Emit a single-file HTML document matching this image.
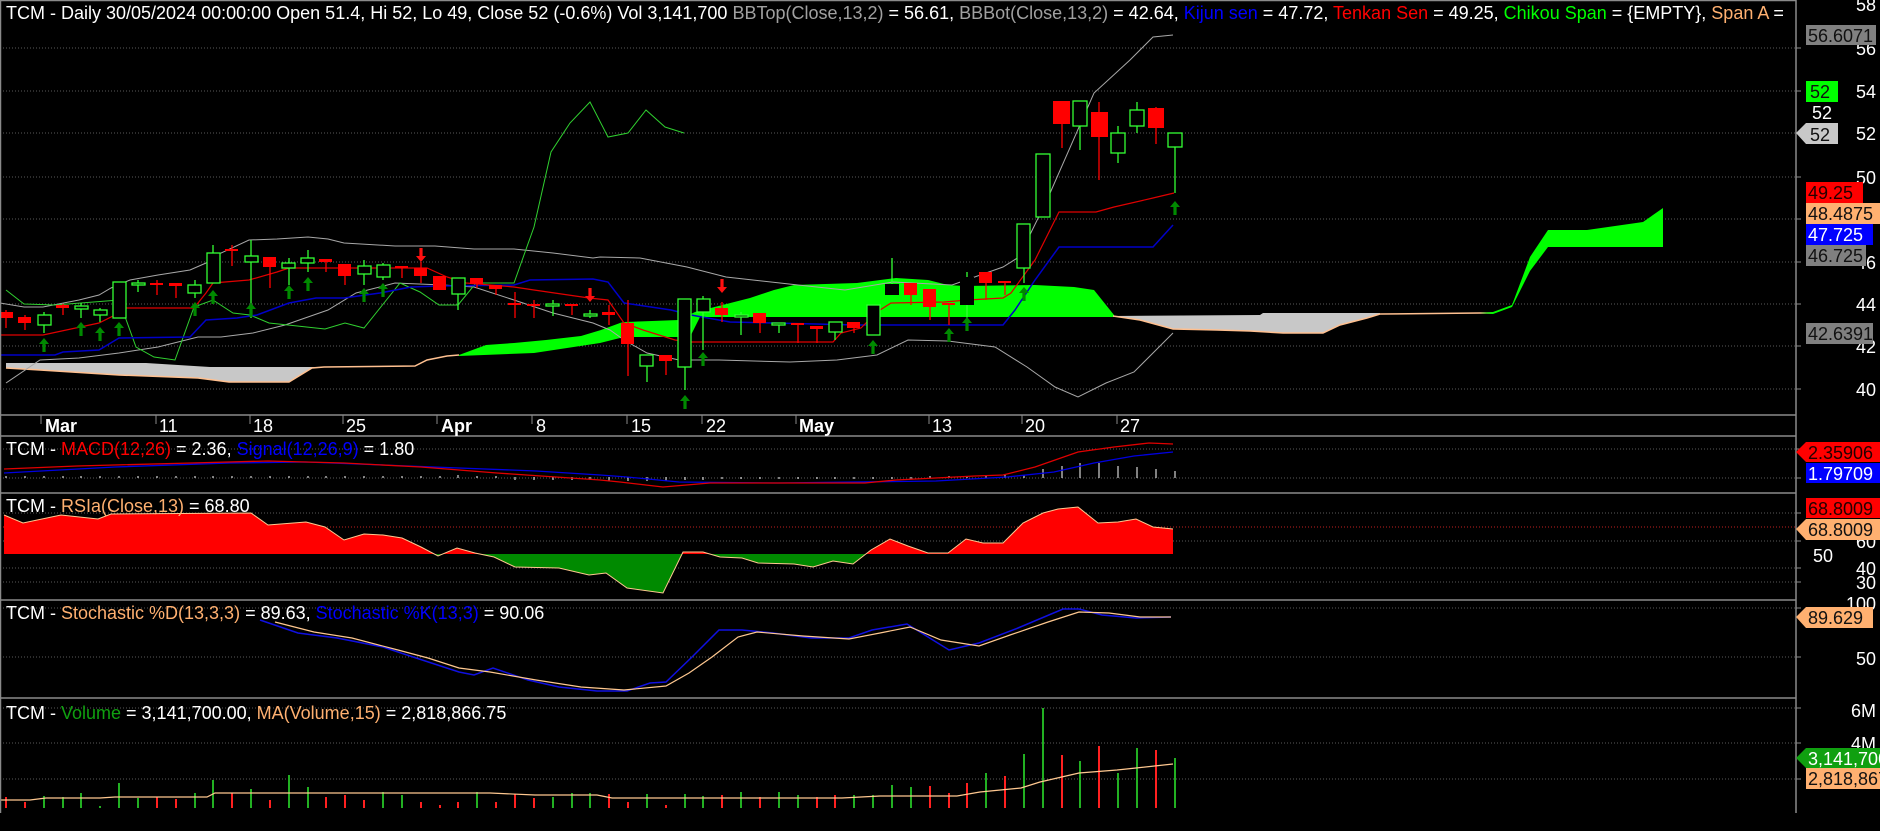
<!DOCTYPE html>
<html><head><meta charset="utf-8"><style>
html,body{margin:0;padding:0;background:#000;width:1880px;height:831px;overflow:hidden}
svg{display:block}
text{font-family:"Liberation Sans",Arial,sans-serif;font-size:18px}
</style></head><body>
<svg width="1880" height="831" viewBox="0 0 1880 831" xmlns="http://www.w3.org/2000/svg">
<defs>
<clipPath id="cp"><rect x="0" y="0" width="1795" height="831"/></clipPath>
<clipPath id="above"><rect x="0" y="490" width="1795" height="64"/></clipPath>
<clipPath id="below"><rect x="0" y="554" width="1795" height="46"/></clipPath>
<path id="ua" d="M0,0 L5,6 L1.6,6 L1.6,14 L-1.6,14 L-1.6,6 L-5,6Z" fill="#008a00"/>
<path id="da" d="M0,14 L5,8 L1.6,8 L1.6,0 L-1.6,0 L-1.6,8 L-5,8Z" fill="#ff1010"/>
</defs>
<rect width="1880" height="831" fill="#000"/>

<g stroke="#5a5a5a" stroke-width="1" stroke-dasharray="1,2">
<line x1="0" y1="48" x2="1795" y2="48"/><line x1="0" y1="91" x2="1795" y2="91"/><line x1="0" y1="133" x2="1795" y2="133"/><line x1="0" y1="177" x2="1795" y2="177"/><line x1="0" y1="219" x2="1795" y2="219"/><line x1="0" y1="262" x2="1795" y2="262"/><line x1="0" y1="304" x2="1795" y2="304"/><line x1="0" y1="346" x2="1795" y2="346"/><line x1="0" y1="389" x2="1795" y2="389"/>
<line x1="0" y1="449" x2="1795" y2="449"/><line x1="0" y1="478" x2="1795" y2="478"/>
<line x1="0" y1="513" x2="1795" y2="513"/><line x1="0" y1="541" x2="1795" y2="541"/><line x1="0" y1="568" x2="1795" y2="568"/><line x1="0" y1="582" x2="1795" y2="582"/>
<line x1="0" y1="608" x2="1795" y2="608"/><line x1="0" y1="657" x2="1795" y2="657"/>
<line x1="0" y1="708" x2="1795" y2="708"/><line x1="0" y1="743" x2="1795" y2="743"/><line x1="0" y1="779" x2="1795" y2="779"/>
</g>
<line x1="0" y1="527" x2="1795" y2="527" stroke="#c02020" stroke-dasharray="1,2"/>

<polygon fill="#c8c8c8" points="6,363 146,363 210,367 324,367 312,368 289,382 229,382 198,378 119,375 40,370 6,368"/>
<polyline fill="none" stroke="#ffc090" stroke-width="1.5" points="6,368 40,370 119,375 198,378 229,382 289,382 312,368 324,367 415,366 427,360 447,356 459,355"/>
<polygon fill="#00ff00" points="459,355 486,345 514,343 546,340 581,336 601,330 620,323 624,322 679,320 695,312 750,298 774,290 794,285 857,283 896,278 928,280 948,285 964,286 1035,285 1074,287 1094,290 1114,315 1114,317 700,317 690,337 624,337 600,343 534,353 459,356"/>
<polygon fill="#c8c8c8" points="1113,316 1260,315 1263,313 1380,313 1380,314 1367,318 1340,325 1323,333 1283,333 1250,331 1217,330 1173,329 1140,320 1113,316"/>
<polyline fill="none" stroke="#ffc090" stroke-width="1.5" points="1113,316 1140,320 1173,329 1217,330 1250,331 1283,333 1323,333 1340,325 1367,318 1380,314 1480,313 1493,313"/>
<polygon fill="#00ff00" points="1480,313 1493,312 1512,305 1530,257 1548,230 1587,230 1643,222 1663,208 1663,247 1548,247 1530,271 1512,307 1493,314"/>

<g fill="none" stroke="#a8a8a8" stroke-width="1">
<polyline points="0,303 24,307 43,307 79,300 99,295 111,288 130,280 158,275 190,270 206,263 221,253 249,240 277,239 308,237 328,239 344,243 395,246 435,246 474,249 514,249 553,253 593,258 600,257 640,258 687,267 726,277 798,285 845,290 893,282 952,285 1003,267 1019,257 1047,200 1094,93 1130,60 1153,37 1173,35"/>
<polyline points="6,383 40,360 79,358 119,353 158,347 198,337 221,337 253,333 285,325 328,310 356,293 395,283 443,285 474,287 514,300 553,313 593,323 610,330 624,340 647,353 679,360 719,360 790,362 837,360 877,355 908,340 948,341 995,347 1027,367 1055,387 1078,397 1106,383 1134,372 1153,353 1173,333"/>
</g>
<polyline fill="none" stroke="#30d030" stroke-width="1" points="6,290 24,304 55,305 119,300 136,347 154,357 175,360 194,307 213,300 233,313 250,315 269,323 288,325 325,329 345,323 364,328 400,283 420,292 439,305 458,305 476,283 514,283 534,227 551,152 570,123 590,102 608,137 628,133 646,110 665,127 684,133"/>
<polyline fill="none" stroke="#0000c8" stroke-width="1.5" points="0,355 55,355 63,352 99,350 119,338 190,337 206,320 237,318 257,315 289,303 316,298 344,298 380,293 411,287 439,286 514,285 530,280 593,279 608,282 624,303 671,310 691,315 730,322 857,325 1003,325 1015,310 1035,280 1059,247 1153,247 1173,225"/>
<polyline fill="none" stroke="#e00000" stroke-width="1.2" points="0,335 43,335 99,323 119,313 126,308 194,308 206,293 213,283 249,280 277,272 289,268 427,268 447,277 466,283 514,287 534,290 589,298 608,300 624,323 643,330 675,340 691,342 833,342 841,333 861,328 877,312 891,303 944,302 968,300 1003,298 1011,293 1035,260 1059,212 1096,212 1114,207 1153,198 1174,193"/>

<g stroke-width="1.3">
<g stroke="#ff0000" fill="#ff0000">
<line x1="6" y1="310" x2="6" y2="328"/><rect x="0" y="312" width="13" height="6" stroke="none"/>
<line x1="25" y1="315" x2="25" y2="330"/><rect x="18" y="317" width="13" height="6" stroke="none"/>
<line x1="63" y1="304" x2="63" y2="315"/><rect x="56" y="305" width="13" height="3" stroke="none"/>
<line x1="157" y1="280" x2="157" y2="295"/><rect x="150" y="283" width="13" height="2" stroke="none"/>
<line x1="176" y1="283" x2="176" y2="298"/><rect x="169" y="283" width="13" height="3" stroke="none"/>
<line x1="232" y1="245" x2="232" y2="266"/><rect x="225" y="249" width="13" height="2" stroke="none"/>
<line x1="270" y1="257" x2="270" y2="288"/><rect x="263" y="257" width="13" height="10" stroke="none"/>
<line x1="326" y1="259" x2="326" y2="272"/><rect x="319" y="259" width="13" height="3" stroke="none"/>
<line x1="345" y1="264" x2="345" y2="285"/><rect x="338" y="264" width="13" height="12" stroke="none"/>
<line x1="402" y1="266" x2="402" y2="278"/><rect x="395" y="266" width="13" height="2" stroke="none"/>
<line x1="421" y1="262" x2="421" y2="283"/><rect x="414" y="268" width="13" height="8" stroke="none"/>
<line x1="440" y1="276" x2="440" y2="290"/><rect x="433" y="276" width="13" height="14" stroke="none"/>
<line x1="477" y1="278" x2="477" y2="288"/><rect x="470" y="278" width="13" height="6" stroke="none"/>
<line x1="496" y1="285" x2="496" y2="295"/><rect x="489" y="285" width="13" height="4" stroke="none"/>
<line x1="515" y1="292" x2="515" y2="318"/><rect x="508" y="303" width="13" height="2" stroke="none"/>
<line x1="534" y1="300" x2="534" y2="318"/><rect x="527" y="304" width="13" height="2" stroke="none"/>
<line x1="572" y1="304" x2="572" y2="315"/><rect x="565" y="304" width="13" height="2" stroke="none"/>
<line x1="609" y1="305" x2="609" y2="325"/><rect x="602" y="312" width="13" height="3" stroke="none"/>
<line x1="628" y1="300" x2="628" y2="376"/><rect x="621" y="323" width="13" height="21" stroke="none"/>
<line x1="666" y1="355" x2="666" y2="375"/><rect x="659" y="355" width="13" height="6" stroke="none"/>
<line x1="722" y1="302" x2="722" y2="322"/><rect x="715" y="308" width="13" height="7" stroke="none"/>
<line x1="760" y1="313" x2="760" y2="333"/><rect x="753" y="313" width="13" height="10" stroke="none"/>
<line x1="798" y1="323" x2="798" y2="343"/><rect x="791" y="323" width="13" height="2" stroke="none"/>
<line x1="817" y1="326" x2="817" y2="343"/><rect x="810" y="326" width="13" height="3" stroke="none"/>
<line x1="854" y1="322" x2="854" y2="333"/><rect x="847" y="322" width="13" height="6" stroke="none"/>
<line x1="911" y1="283" x2="911" y2="305"/><rect x="904" y="283" width="13" height="12" stroke="none"/>
<line x1="930" y1="289" x2="930" y2="320"/><rect x="923" y="289" width="13" height="18" stroke="none"/>
<line x1="949" y1="303" x2="949" y2="325"/><rect x="942" y="303" width="13" height="2" stroke="none"/>
<line x1="986" y1="272" x2="986" y2="300"/><rect x="979" y="272" width="13" height="11" stroke="none"/>
<line x1="1005" y1="281" x2="1005" y2="295"/><rect x="998" y="281" width="13" height="2" stroke="none"/>
<line x1="1062" y1="101" x2="1062" y2="148"/><rect x="1053" y="101" width="17" height="23" stroke="none"/>
<line x1="1099" y1="102" x2="1099" y2="180"/><rect x="1091" y="112" width="17" height="25" stroke="none"/>
<line x1="1156" y1="107" x2="1156" y2="144"/><rect x="1148" y="108" width="16" height="20" stroke="none"/>
</g>
<g stroke="#33ff33" fill="#000">
<line x1="44" y1="312" x2="44" y2="333"/><rect x="38" y="315" width="13" height="10"/>
<line x1="81" y1="303" x2="81" y2="318"/><rect x="75" y="306" width="13" height="3"/>
<line x1="100" y1="308" x2="100" y2="322"/><rect x="94" y="310" width="13" height="5"/>
<rect x="113" y="282" width="13" height="36"/>
<line x1="138" y1="280" x2="138" y2="292"/><rect x="132" y="283" width="13" height="2"/>
<line x1="195" y1="280" x2="195" y2="298"/><rect x="188" y="285" width="13" height="8"/>
<line x1="213" y1="245" x2="213" y2="283"/><rect x="207" y="253" width="13" height="30"/>
<line x1="251" y1="240" x2="251" y2="318"/><rect x="245" y="256" width="13" height="6"/>
<line x1="289" y1="258" x2="289" y2="285"/><rect x="282" y="263" width="13" height="5"/>
<line x1="308" y1="250" x2="308" y2="272"/><rect x="301" y="258" width="13" height="5"/>
<line x1="364" y1="260" x2="364" y2="285"/><rect x="358" y="266" width="13" height="8"/>
<line x1="383" y1="263" x2="383" y2="280"/><rect x="377" y="265" width="13" height="12"/>
<line x1="458" y1="278" x2="458" y2="310"/><rect x="452" y="278" width="13" height="16"/>
<line x1="553" y1="300" x2="553" y2="316"/><rect x="546" y="304" width="13" height="2"/>
<line x1="590" y1="310" x2="590" y2="318"/><rect x="584" y="314" width="13" height="2"/>
<line x1="647" y1="355" x2="647" y2="382"/><rect x="640" y="355" width="13" height="11"/>
<line x1="685" y1="299" x2="685" y2="390"/><rect x="678" y="299" width="13" height="68"/>
<line x1="703" y1="296" x2="703" y2="350"/><rect x="697" y="299" width="13" height="13"/>
<line x1="741" y1="312" x2="741" y2="335"/><rect x="735" y="315" width="13" height="2"/>
<line x1="779" y1="323" x2="779" y2="333"/><rect x="772" y="323" width="13" height="2"/>
<line x1="835" y1="322" x2="835" y2="340"/><rect x="829" y="322" width="13" height="10"/>
<rect x="867" y="305" width="13" height="30"/>
<line x1="892" y1="258" x2="892" y2="284"/>
<line x1="967" y1="272" x2="967" y2="320"/>
<line x1="1024" y1="224" x2="1024" y2="283"/><rect x="1017" y="224" width="13" height="44"/>
<rect x="1036" y="154" width="14" height="63"/>
<line x1="1080" y1="101" x2="1080" y2="150"/><rect x="1073" y="101" width="14" height="25"/>
<line x1="1118" y1="126" x2="1118" y2="163"/><rect x="1111" y="133" width="14" height="20"/>
<line x1="1137" y1="102" x2="1137" y2="133"/><rect x="1130" y="110" width="14" height="16"/>
<line x1="1175" y1="147" x2="1175" y2="193"/><rect x="1168" y="133" width="14" height="14"/>
</g>
<rect x="885" y="284" width="14" height="11" fill="#000"/>
<rect x="960" y="277" width="14" height="28" fill="#000"/>
</g>

<use href="#ua" x="44" y="338"/><use href="#ua" x="81" y="322"/><use href="#ua" x="100" y="327"/><use href="#ua" x="119" y="322"/>
<use href="#ua" x="195" y="302"/><use href="#ua" x="213" y="290"/><use href="#ua" x="251" y="303"/><use href="#ua" x="289" y="285"/>
<use href="#ua" x="308" y="277"/><use href="#ua" x="364" y="288"/><use href="#ua" x="383" y="283"/>
<use href="#ua" x="685" y="395"/><use href="#ua" x="703" y="352"/><use href="#ua" x="873" y="340"/><use href="#ua" x="949" y="328"/>
<use href="#ua" x="967" y="317"/><use href="#ua" x="1024" y="287"/><use href="#ua" x="1175" y="201"/>
<use href="#da" x="421" y="248"/><use href="#da" x="590" y="288"/><use href="#da" x="722" y="279"/>

<g stroke="#fff" stroke-width="1">
<path d="M6,476V478M25,476V478M44,476V478M63,476V478M81,476V478M100,476V478M119,476V478M138,476V478M157,476V478M176,476V478M195,476V478M213,476V478M232,476V478M251,476V478M270,476V478M289,476V478M308,476V478M326,476V478M345,476V478M364,476V478M383,476V478M402,476V478M421,476V478M440,476V478M458,475V478M477,476V478M496,476V478M515,477V480M534,477V480M553,477V480M572,477V480M590,477V480M609,477V481M628,477V481M647,477V481M666,477V481M685,477V480M703,477V480M722,477V479M741,477V479M760,477V479M779,477V479M798,477V479M817,477V479M835,477V479M854,477V479M873,477V479M892,477V479M911,477V479M930,476V478M949,476V478M967,476V478M986,475V478M1005,474V478M1024,475V478M1043,469V478M1062,466V478M1080,463V478M1099,463V478M1118,466V478M1137,467V478M1156,469V478M1175,471V478"/>
</g>
<polyline fill="none" stroke="#0000e0" stroke-width="1.3" points="4,473 115,467 230,463 306,462 383,465 459,468 536,471 600,475 627,477 679,482 778,483 936,481 1007,477 1054,472 1094,463 1134,456 1173,452"/>
<polyline fill="none" stroke="#e00000" stroke-width="1.3" points="4,469 77,466 191,463 268,461 344,463 421,467 497,473 600,480 620,482 663,487 710,483 865,483 896,480 975,476 1003,475 1035,467 1078,452 1114,447 1149,443 1173,444"/>

<g>
<polygon clip-path="url(#above)" fill="#ff0000" points="4,515 23,523 61,515 98,519 111,514 251,513 268,525 306,522 325,527 344,540 364,534 383,535 402,538 421,547 438,556 457,548 475,553 494,557 515,567 559,568 589,575 606,573 627,588 663,593 683,552 703,552 720,557 742,558 758,563 794,564 813,567 833,561 853,564 871,550 890,539 908,546 928,553 948,553 966,539 983,543 1003,543 1023,523 1043,513 1058,509 1078,507 1098,523 1118,522 1136,519 1153,527 1173,529 1173,554 4,554"/>
<polygon clip-path="url(#below)" fill="#008a00" points="4,515 23,523 61,515 98,519 111,514 251,513 268,525 306,522 325,527 344,540 364,534 383,535 402,538 421,547 438,556 457,548 475,553 494,557 515,567 559,568 589,575 606,573 627,588 663,593 683,552 703,552 720,557 742,558 758,563 794,564 813,567 833,561 853,564 871,550 890,539 908,546 928,553 948,553 966,539 983,543 1003,543 1023,523 1043,513 1058,509 1078,507 1098,523 1118,522 1136,519 1153,527 1173,529 1173,554 4,554"/>
<polyline fill="none" stroke="#ffc890" stroke-width="1" points="4,515 23,523 61,515 98,519 111,514 251,513 268,525 306,522 325,527 344,540 364,534 383,535 402,538 421,547 438,556 457,548 475,553 494,557 515,567 559,568 589,575 606,573 627,588 663,593 683,552 703,552 720,557 742,558 758,563 794,564 813,567 833,561 853,564 871,550 890,539 908,546 928,553 948,553 966,539 983,543 1003,543 1023,523 1043,513 1058,509 1078,507 1098,523 1118,522 1136,519 1153,527 1173,529"/>
</g>

<polyline fill="none" stroke="#1010e0" stroke-width="1.5" points="260,620 298,633 337,638 383,647 413,657 459,672 474,675 493,668 528,680 559,687 597,691 627,691 650,683 666,682 692,657 719,630 742,630 773,633 811,638 849,638 872,630 907,624 949,650 979,643 1018,628 1063,609 1079,609 1102,615 1136,618 1171,617"/>
<polyline fill="none" stroke="#ffc890" stroke-width="1.2" points="275,622 314,632 352,638 398,650 428,658 459,668 490,672 536,680 581,687 624,690 666,686 689,673 712,657 738,637 757,632 803,636 849,639 880,633 910,627 941,640 979,646 1010,635 1048,622 1079,612 1109,613 1140,617 1171,617"/>

<g stroke-width="2">
<path stroke="#ff2020" d="M6,797V808M25,802V808M157,797V808M176,799V808M232,793V808M270,800V808M326,797V808M345,795V808M364,800V808M421,802V808M440,805V808M458,802V808M496,802V808M515,794V808M534,798V808M609,794V808M628,802V808M666,805V808M722,795V808M760,797V808M817,797V808M835,795V808M930,786V808M949,793V808M967,783V808M1005,776V808M1062,755V808M1099,746V808M1156,750V808"/>
<path stroke="#22b022" d="M44,796V808M63,797V808M81,793V808M100,806V808M119,783V808M138,798V808M195,793V808M213,780V808M251,789V808M289,775V808M308,787V808M383,792V808M402,795V808M477,792V808M553,797V808M572,793V808M590,793V808M647,794V808M685,794V808M703,796V808M741,792V808M779,792V808M798,795V808M854,795V808M873,795V808M892,785V808M911,787V808M986,773V808M1024,754V808M1043,708V808M1080,761V808M1118,773V808M1137,748V808M1175,758V808"/>
</g>
<polyline fill="none" stroke="#ffc890" stroke-width="1.2" points="0,800 30,800 46,798 100,798 115,797 207,797 215,793 400,793 490,793 535,795 597,795 612,798 842,798 880,796 957,796 980,792 1021,788 1040,782 1079,773 1117,770 1136,768 1173,764"/>

<g stroke="#8a8a8a" stroke-width="1.5">
<line x1="0" y1="0.5" x2="1796" y2="0.5"/>
<line x1="0.5" y1="0" x2="0.5" y2="813"/>
<line x1="0" y1="415" x2="1796" y2="415"/>
<line x1="0" y1="436" x2="1796" y2="436"/>
<line x1="0" y1="493" x2="1796" y2="493"/>
<line x1="0" y1="600" x2="1796" y2="600"/>
<line x1="0" y1="698" x2="1796" y2="698"/>
<line x1="1796" y1="0" x2="1796" y2="813"/>
</g>
<g stroke="#8a8a8a" stroke-width="1">
<path d="M1796,48h5M1796,91h5M1796,133h5M1796,177h5M1796,219h5M1796,262h5M1796,304h5M1796,346h5M1796,389h5M1796,449h5M1796,478h5M1796,513h5M1796,541h5M1796,568h5M1796,582h5M1796,608h5M1796,657h5M1796,708h5M1796,743h5M1796,779h5"/>
<path d="M41,415v9M156,415v9M250,415v9M343,415v9M437,415v9M532,415v9M627,415v9M702,415v9M796,415v9M929,415v9M1022,415v9M1117,415v9"/>
</g>

<g fill="#fff">
<text x="45" y="432" font-weight="bold">Mar</text>
<text x="159" y="432">11</text>
<text x="253" y="432">18</text>
<text x="346" y="432">25</text>
<text x="441" y="432" font-weight="bold">Apr</text>
<text x="536" y="432">8</text>
<text x="631" y="432">15</text>
<text x="706" y="432">22</text>
<text x="799" y="432" font-weight="bold">May</text>
<text x="932" y="432">13</text>
<text x="1025" y="432">20</text>
<text x="1120" y="432">27</text>
</g>

<g fill="#fff" text-anchor="end">
<text x="1876" y="11">58</text>
<text x="1876" y="55">56</text>
<text x="1876" y="98">54</text>
<text x="1876" y="140">52</text>
<text x="1876" y="184">50</text>
<text x="1876" y="269">46</text>
<text x="1876" y="311">44</text>
<text x="1876" y="353">42</text>
<text x="1876" y="396">40</text>
<text x="1876" y="548">60</text>
<text x="1876" y="575">40</text>
<text x="1876" y="589">30</text>
<text x="1876" y="610">100</text>
<text x="1876" y="665">50</text>
<text x="1876" y="717">6M</text>
<text x="1876" y="750">4M</text>
</g>
<text x="1813" y="562" fill="#fff">50</text>
<text x="1812" y="119" fill="#fff">52</text>

<rect x="1806" y="25" width="70" height="20" fill="#808080"/><text x="1808" y="42" fill="#111">56.6071</text>
<rect x="1806" y="81" width="32" height="21" fill="#00ff00"/><text x="1810" y="98" fill="#111">52</text>
<polygon points="1796,133 1806,123 1838,123 1838,144 1806,144" fill="#c8c8c8"/><text x="1810" y="141" fill="#111">52</text>
<rect x="1806" y="182" width="57" height="21" fill="#ff0000"/><text x="1808" y="199" fill="#200">49.25</text>
<rect x="1806" y="203" width="74" height="21" fill="#ffb070"/><text x="1808" y="220" fill="#111">48.4875</text>
<rect x="1806" y="224" width="67" height="21" fill="#0000ff"/><text x="1808" y="241" fill="#fff">47.725</text>
<rect x="1806" y="245" width="60" height="21" fill="#808080"/><text x="1808" y="262" fill="#111">46.725</text>
<rect x="1806" y="323" width="67" height="21" fill="#808080"/><text x="1808" y="340" fill="#111">42.6391</text>
<polygon points="1796,452 1806,442 1880,442 1880,462 1806,462" fill="#ff0000"/><text x="1808" y="459" fill="#200">2.35906</text>
<rect x="1806" y="463" width="74" height="20" fill="#0000ff"/><text x="1808" y="480" fill="#fff">1.79709</text>
<rect x="1806" y="498" width="74" height="20" fill="#ff0000"/><text x="1808" y="515" fill="#200">68.8009</text>
<polygon points="1796,529 1806,519 1880,519 1880,540 1806,540" fill="#ffb070"/><text x="1808" y="536" fill="#111">68.8009</text>
<polygon points="1796,617 1806,607 1873,607 1873,628 1806,628" fill="#ffb070"/><text x="1808" y="624" fill="#111">89.629</text>
<polygon points="1796,758 1806,748 1880,748 1880,768 1806,768" fill="#10a010"/><text x="1808" y="765" fill="#fff">3,141,700</text>
<rect x="1806" y="768" width="74" height="21" fill="#ffb070"/><text x="1808" y="785" fill="#111">2,818,867</text>

<g clip-path="url(#cp)">
<text x="6" y="19" fill="#fff">TCM - Daily 30/05/2024 00:00:00 Open 51.4, Hi 52, Lo 49, Close 52 (-0.6%) Vol 3,141,700 <tspan fill="#a0a0a0">BBTop(Close,13,2)</tspan> = 56.61, <tspan fill="#a0a0a0">BBBot(Close,13,2)</tspan> = 42.64, <tspan fill="#0000ff">Kijun sen</tspan> = 47.72, <tspan fill="#ff0000">Tenkan Sen</tspan> = 49.25, <tspan fill="#00ff00">Chikou Span</tspan> = {EMPTY}, <tspan fill="#ffb070">Span A</tspan> = </text>
</g>
<text x="6" y="455" fill="#fff">TCM - <tspan fill="#ff0000">MACD(12,26)</tspan> = 2.36, <tspan fill="#0000ff">Signal(12,26,9)</tspan> = 1.80</text>
<text x="6" y="512" fill="#fff">TCM - <tspan fill="#ffb070">RSIa(Close,13)</tspan> = 68.80</text>
<text x="6" y="619" fill="#fff">TCM - <tspan fill="#ffb070">Stochastic %D(13,3,3)</tspan> = 89.63, <tspan fill="#0000ff">Stochastic %K(13,3)</tspan> = 90.06</text>
<text x="6" y="719" fill="#fff">TCM - <tspan fill="#10a010">Volume</tspan> = 3,141,700.00, <tspan fill="#ffb070">MA(Volume,15)</tspan> = 2,818,866.75</text>
</svg>
</body></html>
